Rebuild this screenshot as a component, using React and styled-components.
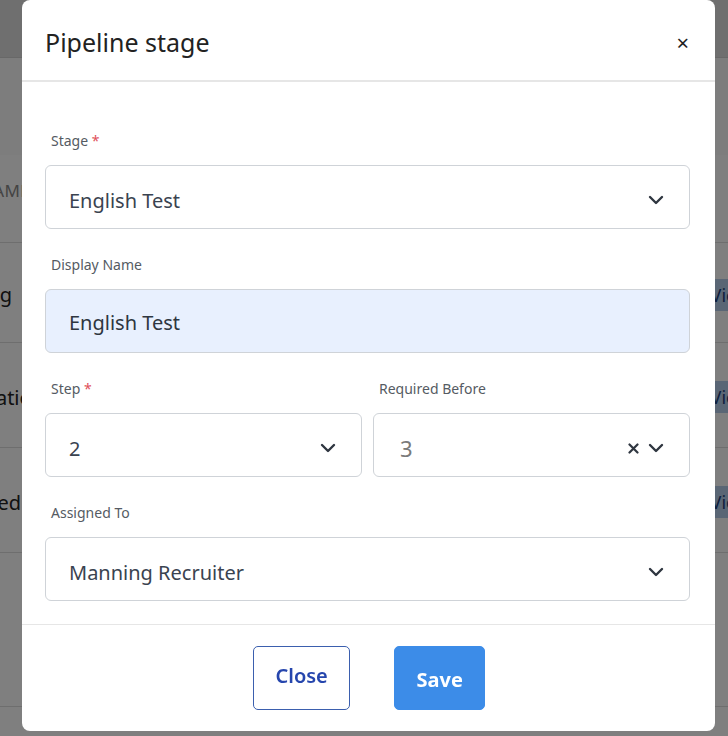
import React from "react";
import styled, { createGlobalStyle } from "styled-components";

const GlobalStyle = createGlobalStyle`
  html, body {
    margin: 0;
    padding: 0;
    background: #ffffff;
    font-family: "Noto Sans", "Open Sans", Arial, sans-serif;
    overflow: hidden;
  }
  * { box-sizing: border-box; }
`;

// rows of the page that sits behind the dialog (only a sliver is visible)
const pageRows = [
  { label: "NAME", height: 88, end: 30, muted: true, badge: false },
  { label: "Screening", height: 100, end: 12, badge: true },
  { label: "Medical Examination", height: 105, end: 44, badge: true },
  { label: "Deployed", height: 105, end: 21, badge: true },
  { label: "", height: 154, end: 0, badge: false },
  { label: "", height: 60, end: 0, badge: false },
];

function Chevron() {
  return (
    <svg width="16" height="10" viewBox="0 0 16 10" aria-hidden="true">
      <path
        d="M2 2l6 6 6-6"
        fill="none"
        stroke="#2f3640"
        strokeWidth="2.4"
        strokeLinecap="round"
        strokeLinejoin="round"
      />
    </svg>
  );
}

function ClearIcon() {
  return (
    <svg width="11" height="11" viewBox="0 0 11 11" aria-hidden="true">
      <path
        d="M1.5 1.5l8 8M9.5 1.5l-8 8"
        fill="none"
        stroke="#2f3640"
        strokeWidth="2.2"
        strokeLinecap="round"
      />
    </svg>
  );
}

function SelectField({ value, muted, clearable }) {
  return (
    <SelectBox $muted={muted}>
      <SelectValue $muted={muted}>{value}</SelectValue>
      <Indicators>
        {clearable && <ClearIcon />}
        <Chevron />
      </Indicators>
    </SelectBox>
  );
}

export default function App() {
  return (
    <>
      <GlobalStyle />
      <Page>
        <TopBar />
        <Spacer />
        {pageRows.map((row, i) => (
          <PageRow key={i} style={{ height: row.height }}>
            <RowCell style={{ paddingRight: 44 - row.end }}>
              <RowText $muted={row.muted}>{row.label}</RowText>
            </RowCell>
            {row.badge && <Badge>View</Badge>}
          </PageRow>
        ))}
      </Page>
      <Backdrop>
        <Modal>
          <Header>
            <Title>Pipeline stage</Title>
            <CloseX aria-label="Close">×</CloseX>
          </Header>
          <Body>
            <Field>
              <Label>
                Stage <Req>*</Req>
              </Label>
              <SelectField value="English Test" />
            </Field>
            <Field>
              <Label>Display Name</Label>
              <TextInput defaultValue="English Test" />
            </Field>
            <TwoCols>
              <Field>
                <Label>
                  Step <Req>*</Req>
                </Label>
                <SelectField value="2" />
              </Field>
              <Field>
                <Label>Required Before</Label>
                <SelectField value="3" muted clearable />
              </Field>
            </TwoCols>
            <Field>
              <Label>Assigned To</Label>
              <SelectField value="Manning Recruiter" />
            </Field>
          </Body>
          <Footer>
            <Button>Close</Button>
            <Button $primary>Save</Button>
          </Footer>
        </Modal>
      </Backdrop>
    </>
  );
}

const Page = styled.div`
  display: flex;
  flex-direction: column;
  height: 736px;
  overflow: hidden;
`;

const TopBar = styled.div`
  flex-shrink: 0;
  height: 58px;
  background: #dedede;
  border-bottom: 1px solid #d0d0d0;
`;

const Spacer = styled.div`
  flex-shrink: 0;
  height: 97px;
  background: #fafafa;
`;

const PageRow = styled.div`
  flex-shrink: 0;
  display: flex;
  align-items: center;
  justify-content: space-between;
  border-bottom: 1px solid #dcdcdc;
  background: #ffffff;
`;

const RowCell = styled.div`
  width: 44px;
  display: flex;
  justify-content: flex-end;
  overflow: visible;
  padding-top: 4px;
`;

const RowText = styled.span`
  white-space: nowrap;
  font-size: ${(p) => (p.$muted ? "17px" : "20px")};
  color: ${(p) => (p.$muted ? "#888" : "#222")};
  letter-spacing: ${(p) => (p.$muted ? "0.3px" : "0")};
  margin-bottom: ${(p) => (p.$muted ? "20px" : "0")};
`;

const Badge = styled.span`
  background: #b5cdea;
  color: #1d3f7a;
  font-size: 18px;
  padding: 4px 8px;
  margin-top: 4px;
  margin-right: -30px;
  white-space: nowrap;
`;

const Backdrop = styled.div`
  position: fixed;
  inset: 0;
  background: rgba(0, 0, 0, 0.5);
  display: flex;
  align-items: flex-start;
`;

const Modal = styled.div`
  margin-left: 22px;
  width: 693px;
  height: 731px;
  background: #ffffff;
  border-radius: 8px;
  display: flex;
  flex-direction: column;
`;

const Header = styled.div`
  height: 82px;
  display: flex;
  align-items: center;
  justify-content: space-between;
  padding: 3px 26px 0 23px;
  border-bottom: 2px solid #e6e6e6;
`;

const Title = styled.h2`
  margin: 0;
  font-size: 25px;
  font-weight: 400;
  color: #222;
`;

const CloseX = styled.span`
  font-size: 22px;
  color: #222;
  line-height: 1;
`;

const Body = styled.div`
  flex: 1;
  padding: 49px 25px 0 23px;
  display: flex;
  flex-direction: column;
  gap: 26px;
  border-bottom: 1px solid #e6e6e6;
`;

const Field = styled.div`
  display: flex;
  flex-direction: column;
  gap: 14px;
  min-width: 0;
`;

const TwoCols = styled.div`
  display: grid;
  grid-template-columns: 1fr 1fr;
  gap: 11px;
`;

const Label = styled.label`
  font-size: 14px;
  line-height: 20px;
  color: #555b63;
  padding-left: 6px;
`;

const Req = styled.span`
  color: #e0505a;
`;

const SelectBox = styled.div`
  height: 64px;
  border: 1px solid #cfd3d8;
  border-radius: 6px;
  display: flex;
  align-items: center;
  justify-content: space-between;
  padding: 6px 25px 0 ${(p) => (p.$muted ? "26px" : "23px")};
  background: #ffffff;
`;

const SelectValue = styled.span`
  font-size: ${(p) => (p.$muted ? "22px" : "20px")};
  color: ${(p) => (p.$muted ? "#7a7a7a" : "#3a4350")};
`;

const Indicators = styled.div`
  display: flex;
  align-items: center;
  gap: 9px;
`;

const TextInput = styled.input`
  height: 64px;
  border: 1px solid #cfd3d8;
  border-radius: 6px;
  background: #e8f0fe;
  padding: 2px 23px 0;
  font-family: inherit;
  font-size: 20px;
  color: #2e3640;
  outline: none;
`;

const Footer = styled.div`
  height: 106px;
  display: flex;
  align-items: center;
  justify-content: center;
  gap: 44px;
`;

const Button = styled.button`
  height: 64px;
  padding: ${(p) => (p.$primary ? "2px 22px 0" : "0 22px 5px")};
  width: ${(p) => (p.$primary ? "91px" : "97px")};
  border-radius: 5px;
  font-family: inherit;
  font-size: 20px;
  font-weight: ${(p) => (p.$primary ? 700 : 600)};
  border: 1px solid ${(p) => (p.$primary ? "#3c8ce8" : "#3b5fae")};
  background: ${(p) => (p.$primary ? "#3c8ce8" : "#ffffff")};
  color: ${(p) => (p.$primary ? "#ffffff" : "#2646ad")};
  cursor: pointer;
`;
